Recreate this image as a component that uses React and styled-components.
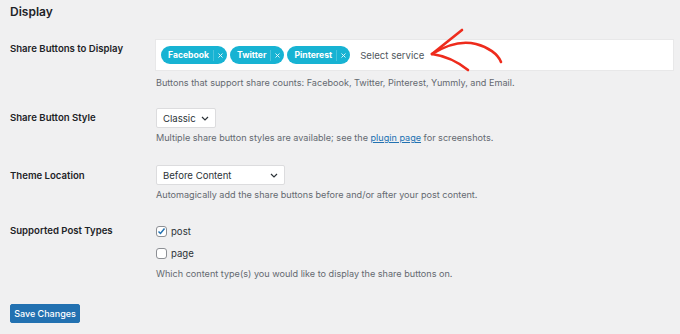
import React from 'react';
import styled, { createGlobalStyle } from 'styled-components';

const GlobalStyle = createGlobalStyle`
  html, body {
    margin: 0;
    padding: 0;
    background: #f0f0f1;
  }
  body {
    font-family: Inter, "Liberation Sans", sans-serif;
    color: #1d2327;
  }
`;

const Page = styled.div`
  position: relative;
  width: 680px;
  height: 334px;
  padding: 0 10px;
  box-sizing: border-box;
  overflow: hidden;
`;

const Heading = styled.h2`
  margin: 0;
  padding-top: 5px;
  font-size: 12px;
  line-height: 14px;
  font-weight: 600;
`;

const Row = styled.div`
  display: grid;
  grid-template-columns: 146px 1fr;
  align-items: start;
  margin-top: ${p => p.$top}px;
`;

const Label = styled.div`
  font-size: 9.6px;
  font-weight: 600;
  line-height: 14px;
  padding-top: ${p => p.$pad}px;
`;

const Field = styled.div`
  display: flex;
  flex-direction: column;
  align-items: flex-start;
`;

const Desc = styled.p`
  margin: ${p => p.$gap}px 0 0;
  font-size: 9.1px;
  line-height: 14px;
  color: #646970;
  a {
    color: #2271b1;
    text-decoration: underline;
  }
`;

const TagBox = styled.div`
  width: 517px;
  height: 30px;
  background: #fff;
  box-sizing: border-box;
  display: flex;
  align-items: center;
  gap: 3px;
  padding: 0 5px;
  box-shadow: 0 0 0 1px #e8e8e9;
`;

const Chip = styled.span`
  display: inline-flex;
  align-items: center;
  height: 18px;
  border-radius: 9px;
  background: #17b3d3;
  color: #fff;
  font-size: 8.6px;
  font-weight: 700;
  padding: 0 0 0 7px;
`;

const ChipX = styled.span`
  display: inline-flex;
  align-items: center;
  justify-content: center;
  height: 11px;
  margin-left: 4px;
  padding: 0 4px 0 4px;
  border-left: 1px solid rgba(255, 255, 255, 0.25);
  opacity: 0.85;
`;

const Placeholder = styled.span`
  margin-left: 7px;
  font-size: 9.6px;
  color: #50575e;
`;

const Select = styled.div`
  display: flex;
  align-items: center;
  justify-content: space-between;
  width: ${p => p.$w}px;
  height: 20px;
  box-sizing: border-box;
  padding: 0 6px 0 6px;
  background: #fff;
  border: 1px solid #dcdcde;
  border-radius: 2px;
  font-size: 9.6px;
  color: #2c3338;
`;

const Check = styled.label`
  display: flex;
  align-items: center;
  gap: 4px;
  height: 14px;
  margin-top: ${p => p.$gap}px;
  font-size: 9.6px;
  color: #2c3338;
`;

const Box = styled.span`
  display: inline-flex;
  align-items: center;
  justify-content: center;
  width: 11px;
  height: 11px;
  box-sizing: border-box;
  border: 1px solid #8c8f94;
  border-radius: 3px;
  background: #fff;
`;

const Button = styled.button`
  display: block;
  margin-top: 23px;
  height: 19px;
  width: 70px;
  padding: 0;
  background: #2271b1;
  border: 1px solid #2271b1;
  border-radius: 2px;
  color: #fff;
  font-family: inherit;
  font-size: 9px;
  font-weight: 500;
`;

const Arrow = styled.svg`
  position: absolute;
  left: 420px;
  top: 22px;
  width: 100px;
  height: 56px;
  overflow: visible;
`;

const Chevron = () => (
  <svg width="8" height="5" viewBox="0 0 8 5">
    <path d="M1 1l3 3 3-3" fill="none" stroke="#2c3338" strokeWidth="1.2" />
  </svg>
);

const Cross = () => (
  <svg width="5" height="5" viewBox="0 0 5 5">
    <path d="M0.5 0.5l4 4M4.5 0.5l-4 4" stroke="#fff" strokeWidth="1" />
  </svg>
);

const services = ['Facebook', 'Twitter', 'Pinterest'];

export default function App() {
  return (
    <>
      <GlobalStyle />
      <Page>
        <Heading>Display</Heading>

        <Row $top={21}>
          <Label $pad={2}>Share Buttons to Display</Label>
          <Field>
            <TagBox>
              {services.map(s => (
                <Chip key={s}>
                  {s}
                  <ChipX>
                    <Cross />
                  </ChipX>
                </Chip>
              ))}
              <Placeholder>Select service</Placeholder>
            </TagBox>
            <Desc $gap={6}>
              Buttons that support share counts: Facebook, Twitter, Pinterest, Yummly, and Email.
            </Desc>
          </Field>
        </Row>

        <Row $top={18}>
          <Label $pad={3}>Share Button Style</Label>
          <Field>
            <Select $w={60}>
              Classic <Chevron />
            </Select>
            <Desc $gap={3}>
              Multiple share button styles are available; see the <a href="#">plugin page</a> for screenshots.
            </Desc>
          </Field>
        </Row>

        <Row $top={20}>
          <Label $pad={4}>Theme Location</Label>
          <Field>
            <Select $w={129}>
              Before Content <Chevron />
            </Select>
            <Desc $gap={3}>
              Automagically add the share buttons before and/or after your post content.
            </Desc>
          </Field>
        </Row>

        <Row $top={22}>
          <Label $pad={0}>Supported Post Types</Label>
          <Field>
            <Check $gap={0}>
              <Box>
                <svg width="9" height="9" viewBox="0 0 9 9">
                  <path d="M1.5 4.5l2 2 4-5" fill="none" stroke="#2271b1" strokeWidth="1.5" />
                </svg>
              </Box>
              post
            </Check>
            <Check $gap={8}>
              <Box />
              page
            </Check>
            <Desc $gap={7}>
              Which content type(s) you would like to display the share buttons on.
            </Desc>
          </Field>
        </Row>

        <Button>Save Changes</Button>

        <Arrow viewBox="0 0 100 56">
          <g fill="none" stroke="#ee2b1c" strokeWidth="2.6" strokeLinecap="round">
            <path d="M12 32 C22 24 32 16 42 8" />
            <path d="M12 32 C28 22 44 19 56 22 C68 25 78 32 81 40" />
            <path d="M12 32 C26 34 38 40 48 48" />
          </g>
        </Arrow>
      </Page>
    </>
  );
}
